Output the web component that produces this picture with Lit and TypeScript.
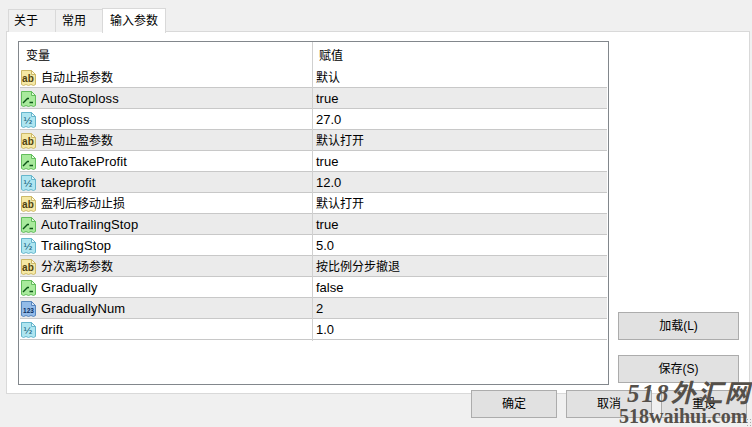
import { LitElement, css, html, svg } from "lit";
import { customElement } from "lit/decorators.js";

type Kind = "ab" | "bool" | "half" | "num";

const rows: [Kind, string, string][] = [
  ["ab", "自动止损参数", "默认"],
  ["bool", "AutoStoploss", "true"],
  ["half", "stoploss", "27.0"],
  ["ab", "自动止盈参数", "默认打开"],
  ["bool", "AutoTakeProfit", "true"],
  ["half", "takeprofit", "12.0"],
  ["ab", "盈利后移动止损", "默认打开"],
  ["bool", "AutoTrailingStop", "true"],
  ["half", "TrailingStop", "5.0"],
  ["ab", "分次离场参数", "按比例分步撤退"],
  ["bool", "Gradually", "false"],
  ["num", "GraduallyNum", "2"],
  ["half", "drift", "1.0"],
];

const palette: Record<Kind, { fill: string; edge: string; ink: string; fold: string }> = {
  ab: { fill: "#f5e8a4", edge: "#cdb968", ink: "#4f4210", fold: "#fff9d8" },
  bool: { fill: "#a8ea9c", edge: "#62bd5c", ink: "#0c5418", fold: "#e2fadb" },
  half: { fill: "#aee5f0", edge: "#66b6cc", ink: "#0e5570", fold: "#e2f7fb" },
  num: { fill: "#93bbe8", edge: "#5585bd", ink: "#0a2c60", fold: "#d4e5f8" },
};

function docIcon(kind: Kind) {
  const c = palette[kind];
  let mark;
  if (kind === "bool") {
    mark = svg`<path d="M3 12 L7.5 7.5 H9 M9.5 11.5 H13" fill="none" stroke=${c.ink} stroke-width="1.4"/>`;
  } else if (kind === "ab") {
    mark = svg`<text x="8" y="12" text-anchor="middle" font-family="'Liberation Sans',sans-serif" font-size="10" font-weight="700" fill=${c.ink}>ab</text>`;
  } else if (kind === "half") {
    mark = svg`<text x="8" y="12" text-anchor="middle" font-family="'DejaVu Sans',sans-serif" font-size="9.5" fill=${c.ink}>½</text>`;
  } else {
    mark = svg`<text x="8.5" y="12" text-anchor="middle" font-family="'Liberation Sans',sans-serif" font-size="6.5" font-weight="700" fill=${c.ink}>123</text>`;
  }
  return html`<svg class="icon" width="17" height="16" viewBox="0 0 17 16">
    <path
      d="M1.5 .5 H11.5 L15.5 4.5 V14.5 L13.5 15.5 L11 14.5 L8.5 15.5 L6 14.5 L3.5 15.5 L1.5 14.5 Z"
      fill=${c.fill}
      stroke=${c.edge}
    />
    <path d="M11.5 .5 V4.5 H15.5 Z" fill=${c.fold} stroke=${c.edge} />
    ${mark}
  </svg>`;
}

@customElement("app-root")
export class AppRoot extends LitElement {
  public static styles = css`
    :host {
      display: block;
      position: relative;
      width: 752px;
      height: 427px;
      overflow: hidden;
      background: #f0f0f0;
      color: #000;
      font-family: "Liberation Sans", "Noto Sans CJK SC", sans-serif;
      font-size: 12px;
    }

    .tabs {
      display: flex;
      align-items: flex-end;
      height: 32px;
      padding: 0 0 0 8px;
      box-sizing: border-box;
    }

    .tab {
      height: 23px;
      box-sizing: border-box;
      border: 1px solid #d9d9d9;
      border-bottom: none;
      margin-right: -1px;
      background: #f0f0f0;
      line-height: 23px;
      padding-left: 5px;
    }

    .tab.about {
      width: 48px;
    }

    .tab.common {
      width: 48px;
      padding-left: 6px;
    }

    .tab.active {
      position: relative;
      z-index: 1;
      width: 64px;
      height: 25px;
      margin-bottom: -1px;
      padding-left: 7px;
      background: #fff;
      line-height: 24px;
    }

    .pane {
      box-sizing: border-box;
      width: 744px;
      height: 363px;
      margin-left: 6px;
      margin-top: -1px;
      padding: 9px 10px 7px 11px;
      display: flex;
      gap: 9px;
      background: #fff;
      border: 1px solid #d9d9d9;
    }

    .list {
      box-sizing: border-box;
      flex: none;
      width: 591px;
      height: 344px;
      border: 1px solid #82878c;
      padding: 0 1px;
      font-size: 13px;
    }

    .row {
      display: grid;
      grid-template-columns: 292px 1fr;
      height: 21px;
      box-sizing: border-box;
      border-bottom: 1px solid #c8c8c8;
      line-height: 22px;
    }

    .row.even {
      background: #ebebeb;
    }

    .head {
      height: 25px;
      border-bottom: none;
      line-height: 28px;
      font-size: 12px;
    }

    .head .name {
      padding: 0 0 0 6px;
      display: block;
    }

    .head .value {
      padding-left: 6px;
    }

    .name {
      display: flex;
      align-items: center;
      gap: 4px;
      padding-top: 2px;
      box-sizing: border-box;
      height: 20px;
      letter-spacing: 0.1px;
      white-space: nowrap;
    }

    .cn {
      font-size: 12px;
      letter-spacing: 0;
    }

    .icon {
      flex: none;
    }

    .value {
      border-left: 1px solid #d0d0d0;
      padding-left: 3px;
      white-space: nowrap;
    }

    .side {
      display: flex;
      flex-direction: column;
      justify-content: flex-end;
      gap: 15px;
      padding: 0 0 3px;
    }

    .btn {
      box-sizing: border-box;
      width: 121px;
      height: 28px;
      border: 1px solid #acacac;
      background: #e1e1e1;
      line-height: 26px;
      text-align: center;
    }

    .footer {
      position: absolute;
      left: 471px;
      top: 390px;
      display: flex;
      gap: 9px;
    }

    .footer .btn {
      width: 86px;
    }

    .mark {
      position: absolute;
      left: 619px;
      top: 381px;
      color: #55504a;
      pointer-events: none;
      white-space: nowrap;
    }

    .mark-cn {
      position: absolute;
      left: 8px;
      top: 0;
      font-family: "Liberation Serif", "Noto Sans CJK SC", serif;
      font-size: 25px;
      font-style: italic;
      font-weight: 700;
      line-height: 26px;
      letter-spacing: 2px;
    }

    .mark-en {
      position: absolute;
      left: 0;
      top: 24px;
      font-family: "Liberation Serif", serif;
      font-size: 20px;
      font-weight: 700;
      line-height: 22px;
    }

    .grip {
      position: absolute;
      right: 0;
      bottom: 0;
      width: 6px;
      height: 9px;
      background: radial-gradient(circle, #a8a8a8 1px, transparent 1px) 0 0 / 3px 3px;
    }
  `;

  private isCn(text: string) {
    return /[^\x00-\x7f]/.test(text);
  }

  public render() {
    return html`
      <div class="tabs">
        <div class="tab about">关于</div>
        <div class="tab common">常用</div>
        <div class="tab active">输入参数</div>
      </div>
      <div class="pane">
        <div class="list">
          <div class="row head">
            <div class="name">变量</div>
            <div class="value">赋值</div>
          </div>
          ${rows.map(
            ([kind, name, value], i) => html`
              <div class="row ${i % 2 === 1 ? "even" : ""}">
                <div class="name">
                  ${docIcon(kind)}
                  <span class=${this.isCn(name) ? "cn" : ""}>${name}</span>
                </div>
                <div class="value">
                  <span class=${this.isCn(value) ? "cn" : ""}>${value}</span>
                </div>
              </div>
            `,
          )}
        </div>
        <div class="side">
          <div class="btn">加载(L)</div>
          <div class="btn">保存(S)</div>
        </div>
      </div>
      <div class="footer">
        <div class="btn">确定</div>
        <div class="btn">取消</div>
        <div class="btn">重设</div>
      </div>
      <div class="grip"></div>
      <div class="mark">
        <div class="mark-cn">518外汇网</div>
        <div class="mark-en">518waihui.com</div>
      </div>
    `;
  }
}
